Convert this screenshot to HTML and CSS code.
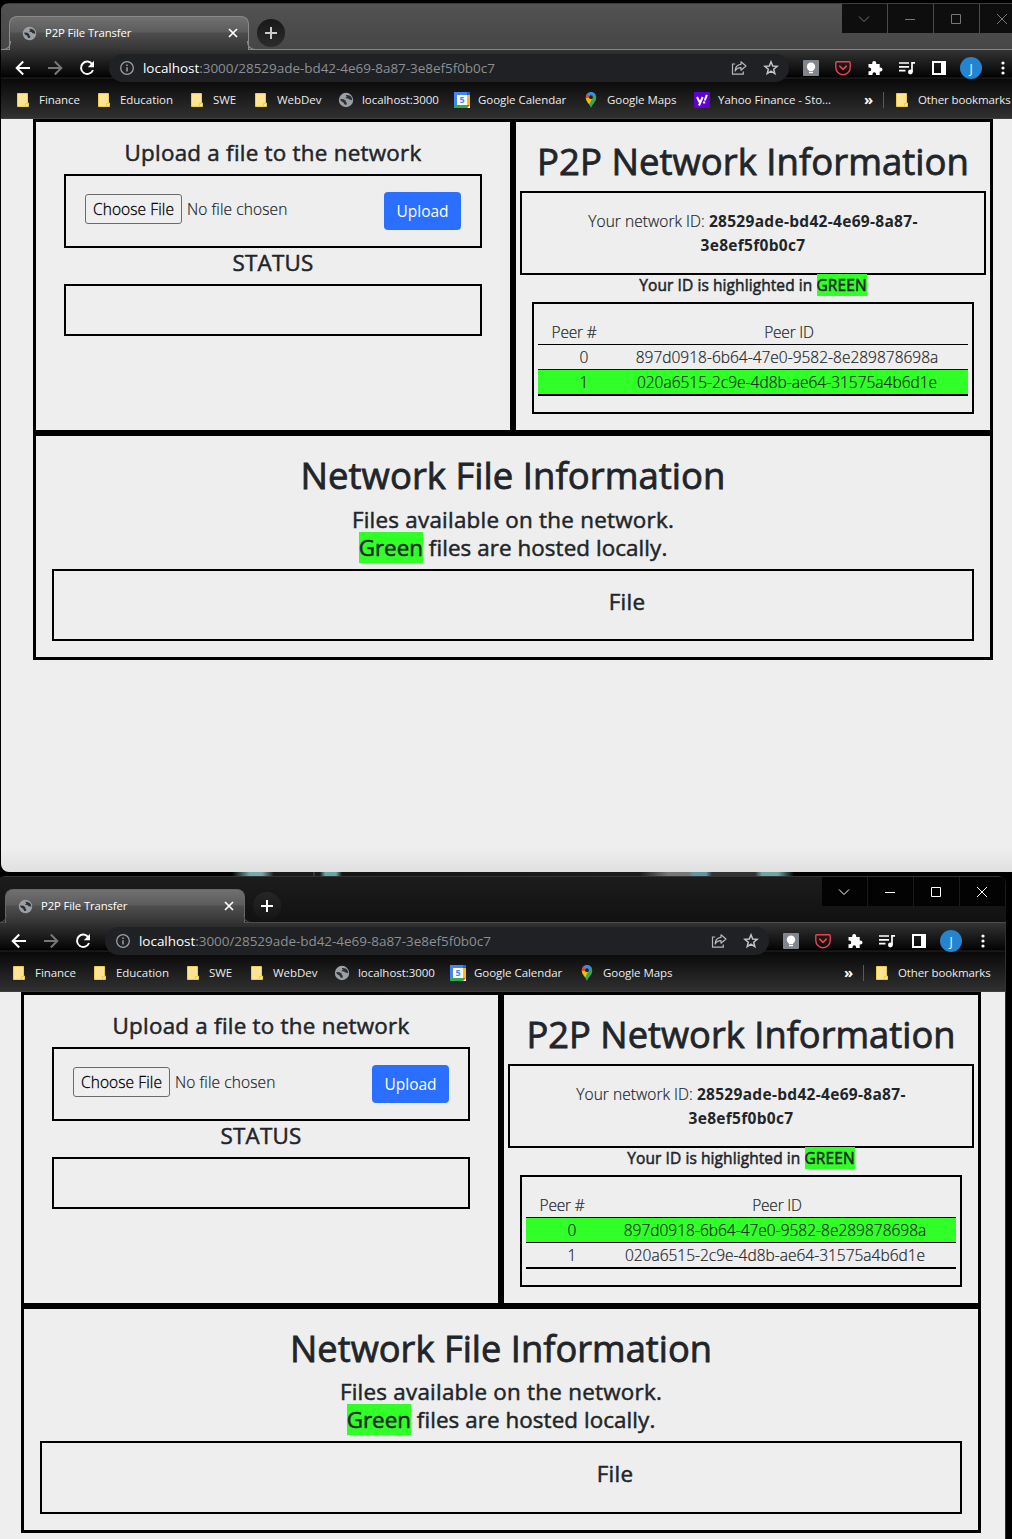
FILE: index.html
```html
<!DOCTYPE html>
<html lang="en">
<head>
<meta charset="utf-8">
<title>P2P File Transfer</title>
<link rel="stylesheet" href="styles.css">
</head>
<body>
<svg class="defs" aria-hidden="true">
  <symbol id="globe" viewBox="0 0 16 16"><circle cx="8" cy="8" r="7.200" fill="#9aa0a6"/><path d="M2.300 7l3.500.3 2 1.500 0 1.400 1 .4-.2 2.200C5.500 13 6.500 11 5 10.200 4 9.700 2.300 9 2.300 7zM8 3c-.3 1 .2 1.200 1 1.300-.2.900-1.500 1-1.400 1.900l2.500.2 1 1.200 1.700.2 1.300.7c.2-2.500-.8-4-2.500-4.900C10.600 3 9 2.700 8 3z" fill="#2f3032"/></symbol>
  <symbol id="close" viewBox="0 0 10 10"><path d="M1 1l8 8M9 1L1 9" stroke="#fff" stroke-width="1.700"/></symbol>
  <symbol id="plus" viewBox="0 0 12 12"><path d="M6 0v12M0 6h12" stroke="currentColor" stroke-width="2"/></symbol>
  <symbol id="arrow" viewBox="0 0 16 16"><path d="M15 8H2M8.200 1.500L1.700 8l6.500 6.500" fill="none" stroke="currentColor" stroke-width="2"/></symbol>
  <symbol id="reload" viewBox="0 0 16 16"><path d="M13.300 4.200A6.200 6.200 0 1 0 14 10" fill="none" stroke="#fff" stroke-width="2"/><path d="M15 .8v6.400H8.800z" fill="#fff"/></symbol>
  <symbol id="info" viewBox="0 0 14 14"><circle cx="7" cy="7" r="6.300" fill="none" stroke="#9aa0a6" stroke-width="1.300"/><path d="M7 6.200v4.300M7 3.400v1.600" stroke="#9aa0a6" stroke-width="1.500"/></symbol>
  <symbol id="share" viewBox="0 0 16 16"><path d="M4.200 4H1.500v10.200h10.800v-2.700" fill="none" stroke="#b8b8b8" stroke-width="1.200"/><path d="M10 1.800L15 6l-5 4.200V7.700C7.200 7.600 5.500 8.500 4.200 11c0-3.600 2-6.300 5.800-6.700z" fill="none" stroke="#b8b8b8" stroke-width="1.200" stroke-linejoin="round"/></symbol>
  <symbol id="star" viewBox="0 0 16 16"><path d="M8 1.800l1.700 4.200 4.500.300-3.500 2.900 1.100 4.400L8 11.200l-3.800 2.400 1.100-4.400L1.800 6.300l4.500-.3z" fill="none" stroke="#c4c4c4" stroke-width="1.500"/></symbol>
  <symbol id="keep" viewBox="0 0 16 16"><rect width="16" height="16" rx="1" fill="#80868b"/><circle cx="8" cy="6.800" r="4.200" fill="#fff"/><path d="M6 9h4v2H6zM6 11.800h4v1.500H6z" fill="#fff"/></symbol>
  <symbol id="pocket" viewBox="0 0 16 16"><path d="M1.800 1.700h12.400q1 0 1 1v4.800a7.200 7.200 0 0 1-14.400 0V2.700q0-1 1-1z" fill="none" stroke="#ef4056" stroke-width="1.400"/><path d="M4.700 6.200L8 9.300l3.300-3.100" fill="none" stroke="#ef4056" stroke-width="1.600" stroke-linecap="round"/></symbol>
  <symbol id="puzzle" viewBox="0 0 16 16"><path d="M1.500 4h3.700V3a2 2 0 0 1 4 0v1h3.500v3.500h.8a2 2 0 0 1 0 4h-.8V15H9.100v-.9a1.800 1.800 0 0 0-3.600 0v.9h-4v-3.700h.800a1.900 1.900 0 0 0 0-3.800h-.8z" fill="#fff"/></symbol>
  <symbol id="music" viewBox="0 0 16 16"><path d="M0 3h10M0 6.800h10M0 10.600h6.500M13 12V2.900h3" fill="none" stroke="#fff" stroke-width="1.700"/><circle cx="11.400" cy="12" r="2.400" fill="#fff"/></symbol>
  <symbol id="panel" viewBox="0 0 14 14"><path d="M1 1h12v12H1z" fill="none" stroke="#fff" stroke-width="2"/><path d="M9 1h4v12H9z" fill="#fff"/></symbol>
  <symbol id="dots" viewBox="0 0 4 14"><circle cx="2" cy="2" r="1.600" fill="#fff"/><circle cx="2" cy="7" r="1.600" fill="#fff"/><circle cx="2" cy="12" r="1.600" fill="#fff"/></symbol>
  <symbol id="folder" viewBox="0 0 16 16"><path d="M2.500 1.500h10V11h1v3.500h-11z" fill="#ffe494" stroke="#f0cb52"/><path d="M10.500 14V11.500H13" fill="none" stroke="#f0cb52"/></symbol>
  <symbol id="calendar" viewBox="0 0 16 16"><path d="M0 0h16v16H0z" fill="#fff"/><path d="M0 0h16v3H3v10H0z" fill="#4285f4"/><path d="M13 3h3v10h-3z" fill="#fbbc04"/><path d="M0 13h13v3H0z" fill="#34a853"/><path d="M13 0h3v3h-3z" fill="#1967d2"/><path d="M13 13h3l-3 3z" fill="#ea4335"/><text x="8" y="11.300" text-anchor="middle" class="glyph-day">5</text></symbol>
  <symbol id="maps" viewBox="0 0 16 16"><path d="M8 16C7.500 12.500 2.800 10 2.800 5.200A5.200 5.200 0 0 1 13.200 5.200C13.200 10 8.500 12.500 8 16z" fill="#34a853"/><path d="M8 5.200L4 9.500C3.200 8.200 2.800 6.800 2.800 5.200z" fill="#fbbc04"/><path d="M8 5.200L2.900 6.300C2.600 4 3.400 2.500 4.200 1.700z" fill="#ea4335"/><path d="M4.200 1.700A5.200 5.200 0 0 1 12.700 3L8 5.200z" fill="#4285f4"/><path d="M4 9.500L9 4l2 3-4.500 5.800z" fill="#fbbc04"/><path d="M9 6.500l4.200-1.300C13.200 10 8.500 12.500 8 16c-.2-1.500-1-2.500-1.800-3.500z" fill="#34a853"/><circle cx="8" cy="5.200" r="1.900" fill="#202124"/></symbol>
  <symbol id="yahoo" viewBox="0 0 16 16"><path d="M0 0h16v16H0z" fill="#6001d2"/><path d="M3 5l2.500 5M8.700 5L5 13.500" stroke="#fff" stroke-width="2"/><path d="M12.800 2.800L10.800 8.500" stroke="#fff" stroke-width="2"/><circle cx="10.100" cy="10.400" r="1.200" fill="#fff"/></symbol>
  <symbol id="c-down" viewBox="0 0 12 12"><path d="M1 3.500l5 5 5-5" fill="none" stroke="currentColor"/></symbol>
  <symbol id="c-min" viewBox="0 0 12 12"><path d="M1 6.500h10" stroke="currentColor"/></symbol>
  <symbol id="c-max" viewBox="0 0 12 12"><path d="M1.500 1.500h9v9h-9z" fill="none" stroke="currentColor"/></symbol>
  <symbol id="c-close" viewBox="0 0 12 12"><path d="M1 1l10 10M11 1L1 11" fill="none" stroke="currentColor"/></symbol>
</svg>

<div class="desktop">
  <section class="window window-back">
    <header class="chrome">
      <div class="tabstrip">
        <div class="tab"><svg class="i15"><use href="#globe"/></svg><span class="tab-title">P2P File Transfer</span><svg class="i10"><use href="#close"/></svg></div>
        <button class="newtab"><svg class="i12"><use href="#plus"/></svg></button>
        <div class="controls"><span><svg class="i12"><use href="#c-down"/></svg></span><span><svg class="i12"><use href="#c-min"/></svg></span><span><svg class="i12"><use href="#c-max"/></svg></span><span><svg class="i12"><use href="#c-close"/></svg></span></div>
      </div>
      <div class="toolbar">
        <span class="cell"><svg class="i16"><use href="#arrow"/></svg></span>
        <span class="cell dim"><svg class="i16 flip"><use href="#arrow"/></svg></span>
        <span class="cell"><svg class="i16"><use href="#reload"/></svg></span>
        <div class="omnibox"><svg class="i14"><use href="#info"/></svg><span class="url"><b>localhost</b>:3000/28529ade-bd42-4e69-8a87-3e8ef5f0b0c7</span><span class="cell"><svg class="i16"><use href="#share"/></svg></span><span class="cell"><svg class="i16"><use href="#star"/></svg></span></div>
        <span class="cell"><svg class="i16"><use href="#keep"/></svg></span>
        <span class="cell"><svg class="i16"><use href="#pocket"/></svg></span>
        <span class="cell"><svg class="i16"><use href="#puzzle"/></svg></span>
        <span class="cell"><svg class="i16"><use href="#music"/></svg></span>
        <span class="cell"><svg class="i14"><use href="#panel"/></svg></span>
        <span class="cell"><span class="avatar">J</span></span>
        <span class="cell"><svg class="dots"><use href="#dots"/></svg></span>
      </div>
      <nav class="bookmarks">
        <div class="marks">
          <a><svg class="i16"><use href="#folder"/></svg><span>Finance</span></a>
          <a><svg class="i16"><use href="#folder"/></svg><span>Education</span></a>
          <a><svg class="i16"><use href="#folder"/></svg><span>SWE</span></a>
          <a><svg class="i16"><use href="#folder"/></svg><span>WebDev</span></a>
          <a><svg class="i16"><use href="#globe"/></svg><span>localhost:3000</span></a>
          <a><svg class="i16"><use href="#calendar"/></svg><span>Google Calendar</span></a>
          <a><svg class="i16"><use href="#maps"/></svg><span>Google Maps</span></a>
          <a><svg class="i16"><use href="#yahoo"/></svg><span>Yahoo Finance - Sto...</span></a>
        </div>
        <span class="more">»</span>
        <a class="other"><svg class="i16"><use href="#folder"/></svg><span>Other bookmarks</span></a>
      </nav>
    </header>
    <main class="page">
      <div class="layout">
        <div class="panel upload">
          <h4>Upload a file to the network</h4>
          <div class="box picker"><button class="choose">Choose File</button><span class="nofile">No file chosen</span><button class="send">Upload</button></div>
          <h4>STATUS</h4>
          <div class="box status"></div>
        </div>
        <div class="panel network">
          <h1>P2P Network Information</h1>
          <div class="box identity">Your network ID: <strong>28529ade-bd42-4e69-8a87-<br>3e8ef5f0b0c7</strong></div>
          <h6>Your ID is highlighted in <mark>GREEN</mark></h6>
          <div class="box peers">
            <div class="peer-head"><span>Peer #</span><span>Peer ID</span></div>
            <div class="peer"><span>0</span><span>897d0918-6b64-47e0-9582-8e289878698a</span></div>
            <div class="peer own"><span>1</span><span>020a6515-2c9e-4d8b-ae64-31575a4b6d1e</span></div>
          </div>
        </div>
        <div class="panel files">
          <h1>Network File Information</h1>
          <h4>Files available on the network.<br><span class="local"><mark>Green</mark> files are hosted locally.</span></h4>
          <div class="box listing"><h4>File</h4></div>
        </div>
      </div>
    </main>
  </section>

  <div class="wallpaper"></div>

  <section class="window window-front">
    <header class="chrome">
      <div class="tabstrip">
        <div class="tab"><svg class="i15"><use href="#globe"/></svg><span class="tab-title">P2P File Transfer</span><svg class="i10"><use href="#close"/></svg></div>
        <button class="newtab"><svg class="i12"><use href="#plus"/></svg></button>
        <div class="controls"><span><svg class="i12"><use href="#c-down"/></svg></span><span><svg class="i12"><use href="#c-min"/></svg></span><span><svg class="i12"><use href="#c-max"/></svg></span><span><svg class="i12"><use href="#c-close"/></svg></span></div>
      </div>
      <div class="toolbar">
        <span class="cell"><svg class="i16"><use href="#arrow"/></svg></span>
        <span class="cell dim"><svg class="i16 flip"><use href="#arrow"/></svg></span>
        <span class="cell"><svg class="i16"><use href="#reload"/></svg></span>
        <div class="omnibox"><svg class="i14"><use href="#info"/></svg><span class="url"><b>localhost</b>:3000/28529ade-bd42-4e69-8a87-3e8ef5f0b0c7</span><span class="cell"><svg class="i16"><use href="#share"/></svg></span><span class="cell"><svg class="i16"><use href="#star"/></svg></span></div>
        <span class="cell"><svg class="i16"><use href="#keep"/></svg></span>
        <span class="cell"><svg class="i16"><use href="#pocket"/></svg></span>
        <span class="cell"><svg class="i16"><use href="#puzzle"/></svg></span>
        <span class="cell"><svg class="i16"><use href="#music"/></svg></span>
        <span class="cell"><svg class="i14"><use href="#panel"/></svg></span>
        <span class="cell"><span class="avatar">J</span></span>
        <span class="cell"><svg class="dots"><use href="#dots"/></svg></span>
      </div>
      <nav class="bookmarks">
        <div class="marks">
          <a><svg class="i16"><use href="#folder"/></svg><span>Finance</span></a>
          <a><svg class="i16"><use href="#folder"/></svg><span>Education</span></a>
          <a><svg class="i16"><use href="#folder"/></svg><span>SWE</span></a>
          <a><svg class="i16"><use href="#folder"/></svg><span>WebDev</span></a>
          <a><svg class="i16"><use href="#globe"/></svg><span>localhost:3000</span></a>
          <a><svg class="i16"><use href="#calendar"/></svg><span>Google Calendar</span></a>
          <a><svg class="i16"><use href="#maps"/></svg><span>Google Maps</span></a>
        </div>
        <span class="more">»</span>
        <a class="other"><svg class="i16"><use href="#folder"/></svg><span>Other bookmarks</span></a>
      </nav>
    </header>
    <main class="page">
      <div class="layout">
        <div class="panel upload">
          <h4>Upload a file to the network</h4>
          <div class="box picker"><button class="choose">Choose File</button><span class="nofile">No file chosen</span><button class="send">Upload</button></div>
          <h4>STATUS</h4>
          <div class="box status"></div>
        </div>
        <div class="panel network">
          <h1>P2P Network Information</h1>
          <div class="box identity">Your network ID: <strong>28529ade-bd42-4e69-8a87-<br>3e8ef5f0b0c7</strong></div>
          <h6>Your ID is highlighted in <mark>GREEN</mark></h6>
          <div class="box peers">
            <div class="peer-head"><span>Peer #</span><span>Peer ID</span></div>
            <div class="peer own"><span>0</span><span>897d0918-6b64-47e0-9582-8e289878698a</span></div>
            <div class="peer"><span>1</span><span>020a6515-2c9e-4d8b-ae64-31575a4b6d1e</span></div>
          </div>
        </div>
        <div class="panel files">
          <h1>Network File Information</h1>
          <h4>Files available on the network.<br><span class="local"><mark>Green</mark> files are hosted locally.</span></h4>
          <div class="box listing"><h4>File</h4></div>
        </div>
      </div>
    </main>
  </section>
</div>
</body>
</html>
```
FILE: styles.css
```css
* { box-sizing: border-box; }
body { margin: 0; height: 1539px; overflow: hidden; background: #000; font-family: "Open Sans", "Liberation Sans", sans-serif; color: #212529; }
svg { display: block; flex: none; }
button { font-family: inherit; padding: 0; border: 0; }
.defs { display: none; }
.i10 { width: 10px; height: 10px; }
.i12 { width: 12px; height: 12px; }
.i14 { width: 14px; height: 14px; }
.i15 { width: 15px; height: 15px; }
.i16 { width: 16px; height: 16px; }
.dots { width: 4px; height: 14px; }
.flip { transform: scaleX(-1); }
.glyph-day { font: 700 9px "Open Sans", sans-serif; fill: #4285f4; }

.desktop { display: flex; flex-direction: column; height: 1539px; padding-top: 3px; overflow: hidden; }
.window { flex: none; display: flex; flex-direction: column; overflow: hidden; }
.window-back { width: 1025px; height: 869px; margin-left: 1px; border-radius: 8px; }
.window-front { width: 1009px; height: 680px; margin-left: -3px; border-radius: 8px 8px 0 0; }
.wallpaper { height: 4px; flex: none; background: linear-gradient(90deg, #000 232px, #79a9ab 250px 262px, #1b1b1b 274px 313px, #555 314px, #1b1b1b 315px 320px, #6aa5a8 325px 336px, #151515 342px, #1c1c1c 640px, #777 668px 688px, #5f97a5 694px 706px, #333 712px 755px, #6fa5a3 762px 778px, #000 794px); }

/* browser frame */
.chrome { height: 116px; flex: none; border-top: 1px solid #3c3c3c; border-bottom: 1px solid #404040; background: linear-gradient(#333 46px, #050505 72px, #000 73px, #262626 74px, #090909 75px, #303030 114px); color: #ebebeb; font-size: 11.500px; letter-spacing: -.05px; }
.tabstrip { display: flex; align-items: flex-end; height: 46px; padding-left: 8px; background: linear-gradient(#525252, #464646); box-shadow: inset 0 -1px #858585; }
.tab { position: relative; display: flex; align-items: center; width: 240px; height: 34px; padding: 0 10px 1px 12px; border: 1px solid #8a8a8a; border-bottom: 0; border-radius: 8px 8px 0 0; background: linear-gradient(#707070, #5c5c5c 15px, #4e4e4e 16px, #343434); }
.tab::before, .tab::after { content: ""; position: absolute; bottom: 0; width: 8px; height: 8px; border-bottom: 1px solid #8a8a8a; }
.tab::before { left: -8px; border-right: 1px solid #8a8a8a; border-bottom-right-radius: 8px; }
.tab::after { right: -8px; border-left: 1px solid #8a8a8a; border-bottom-left-radius: 8px; }
.tab-title { flex: 1; margin-left: 8px; padding-bottom: 2px; font-size: 11.300px; color: #fff; letter-spacing: -.1px; }
.newtab { display: grid; place-items: center; width: 28px; height: 28px; margin: 0 0 3px 8px; border-radius: 50%; background: linear-gradient(#181818, #2c2c2c); color: #ccc; }
.controls { display: flex; align-self: flex-start; margin-left: auto; color: #777; }
.controls span { display: grid; place-items: center; width: 46px; height: 29px; padding-right: 2px; background: #0e0e0e; border-right: 1px solid #4a4a4a; }
.controls span:last-child { border-right-color: #0e0e0e; }
.toolbar { display: flex; align-items: center; height: 36px; padding: 0 7px 0 6px; }
.cell { display: grid; place-items: center; width: 32px; height: 32px; flex: none; color: #fff; }
.cell.dim { color: #777; }
.omnibox { display: flex; align-items: center; flex: 1; height: 28px; margin: 0 6px; padding: 0 2px 0 11px; border-radius: 14px; background: #202124; }
.url { flex: 1; margin-left: 9px; font-size: 13.500px; letter-spacing: -.04px; color: #8c8f93; }
.url b { font-weight: 400; color: #fff; }
.avatar { display: grid; place-items: center; width: 22px; height: 22px; border-radius: 50%; background: #2484d0; font-size: 12px; color: #fff; }
.bookmarks { display: flex; align-items: center; height: 32px; padding: 0 0 4px 14px; white-space: nowrap; }
.bookmarks a { display: flex; align-items: center; gap: 8px; }
.bookmarks a span { padding-bottom: 2px; }
.marks { display: grid; flex: 1; grid-template-columns: 81px 93px 64px 85px 116px 129px 111px 150px; }
.more { width: 19px; padding-bottom: 2px; font-size: 15px; font-weight: 700; line-height: 18px; color: #fff; }
.other { width: 143px; height: 16px; padding-left: 10px; border-left: 1px solid #5a5a5a; letter-spacing: -.12px; }

.window-front .chrome { border-top-color: #333; box-shadow: inset -1px 0 #303030; }
.window-front .tabstrip { background: linear-gradient(#1c1c1c, #111); box-shadow: inset 0 -1px #4c4c4c; }
.window-front .tab { border-color: #666; }
.window-front .tab::before, .window-front .tab::after { border-color: #4c4c4c; }
.window-front .newtab { background: linear-gradient(#262626, #151515); color: #fff; }
.window-front .controls { color: #fff; }
.window-front .controls span { background: #030303; border-right-color: #1c1c1c; }

/* transfer page */
.page { flex: 1; padding-left: 32px; background: #eee; }
.window-back .page { background: linear-gradient(#eee 730px, #e0e0e0); }
.window-front .page { padding-left: 24px; border-right: 1px solid #303030; }
.layout { display: grid; grid-template: 314px 227px / 480px 480px; width: 960px; text-align: center; }
.panel { border: 3px solid #000; }
.box { border: 2px solid #000; }
h1, h4, h6 { margin: 0; font-weight: 400; -webkit-text-stroke: .5px #212529; }
h1 { font-size: 36.500px; line-height: 45px; letter-spacing: .02px; -webkit-text-stroke-width: .8px; }
h4 { font-size: 22.400px; line-height: 28px; letter-spacing: .25px; }
h6 { font-size: 15.500px; line-height: 20px; letter-spacing: .08px; }
mark { color: inherit; background: #30ff28; }
.window-front h1 { font-size: 36.250px; }

.upload { padding: 17px 28px 0; }
.picker { display: flex; align-items: flex-start; height: 74px; margin: 7px 0 1px; padding: 16px 19px 0; font-size: 15.500px; font-weight: 300; line-height: 30px; }
.choose { width: 97px; height: 30px; margin-top: 2px; border: 1px solid #6b6b6b; border-radius: 3px; background: #efefef; font-size: 15.500px; font-weight: 300; letter-spacing: .1px; color: #000; -webkit-text-stroke: .3px; }
.nofile { flex: 1; margin: 2px 0 0 5px; text-align: left; -webkit-text-stroke: .2px; letter-spacing: .1px; }
.send { width: 77px; height: 38px; border-radius: 4px; background: #2a6fff; font-size: 15.500px; color: #fff; }
.status { height: 52px; margin-top: 7px; }

.network { padding: 17px 4px 0; }
.identity { height: 84px; margin-top: 7px; padding-top: 16px; font-size: 15.500px; font-weight: 300; line-height: 24px; letter-spacing: .05px; -webkit-text-stroke: .2px; }
.identity strong { font-size: 15.500px; font-weight: 700; letter-spacing: .3px; -webkit-text-stroke: 0; }
.peers { height: 112px; margin: 7px 12px 0; padding: 16px 4px 0; font-size: 15.500px; font-weight: 300; -webkit-text-stroke: .2px; }
.peer-head { display: grid; grid-template-columns: 72px 358px; height: 25px; line-height: 25px; border-bottom: 1px solid #000; }
.peer-head span { letter-spacing: -.2px; }
.peer { display: grid; grid-template-columns: 92px 314px; height: 25px; line-height: 25px; border-bottom: 1px solid #000; }
.peer:last-child { height: 26px; border-bottom-width: 2px; }
.own { background: #30ff28; }

.files { grid-column: span 2; padding: 17px 16px 0; }
.files > h4 { margin: 8px 0 7px; }
.window-front .files > h4 { margin-top: 7px; }
.local { letter-spacing: .08px; }
.local mark { letter-spacing: 0; }
.listing { height: 72px; padding: 17px 0 0 228px; }
.window-front .listing { height: 73px; }
```
